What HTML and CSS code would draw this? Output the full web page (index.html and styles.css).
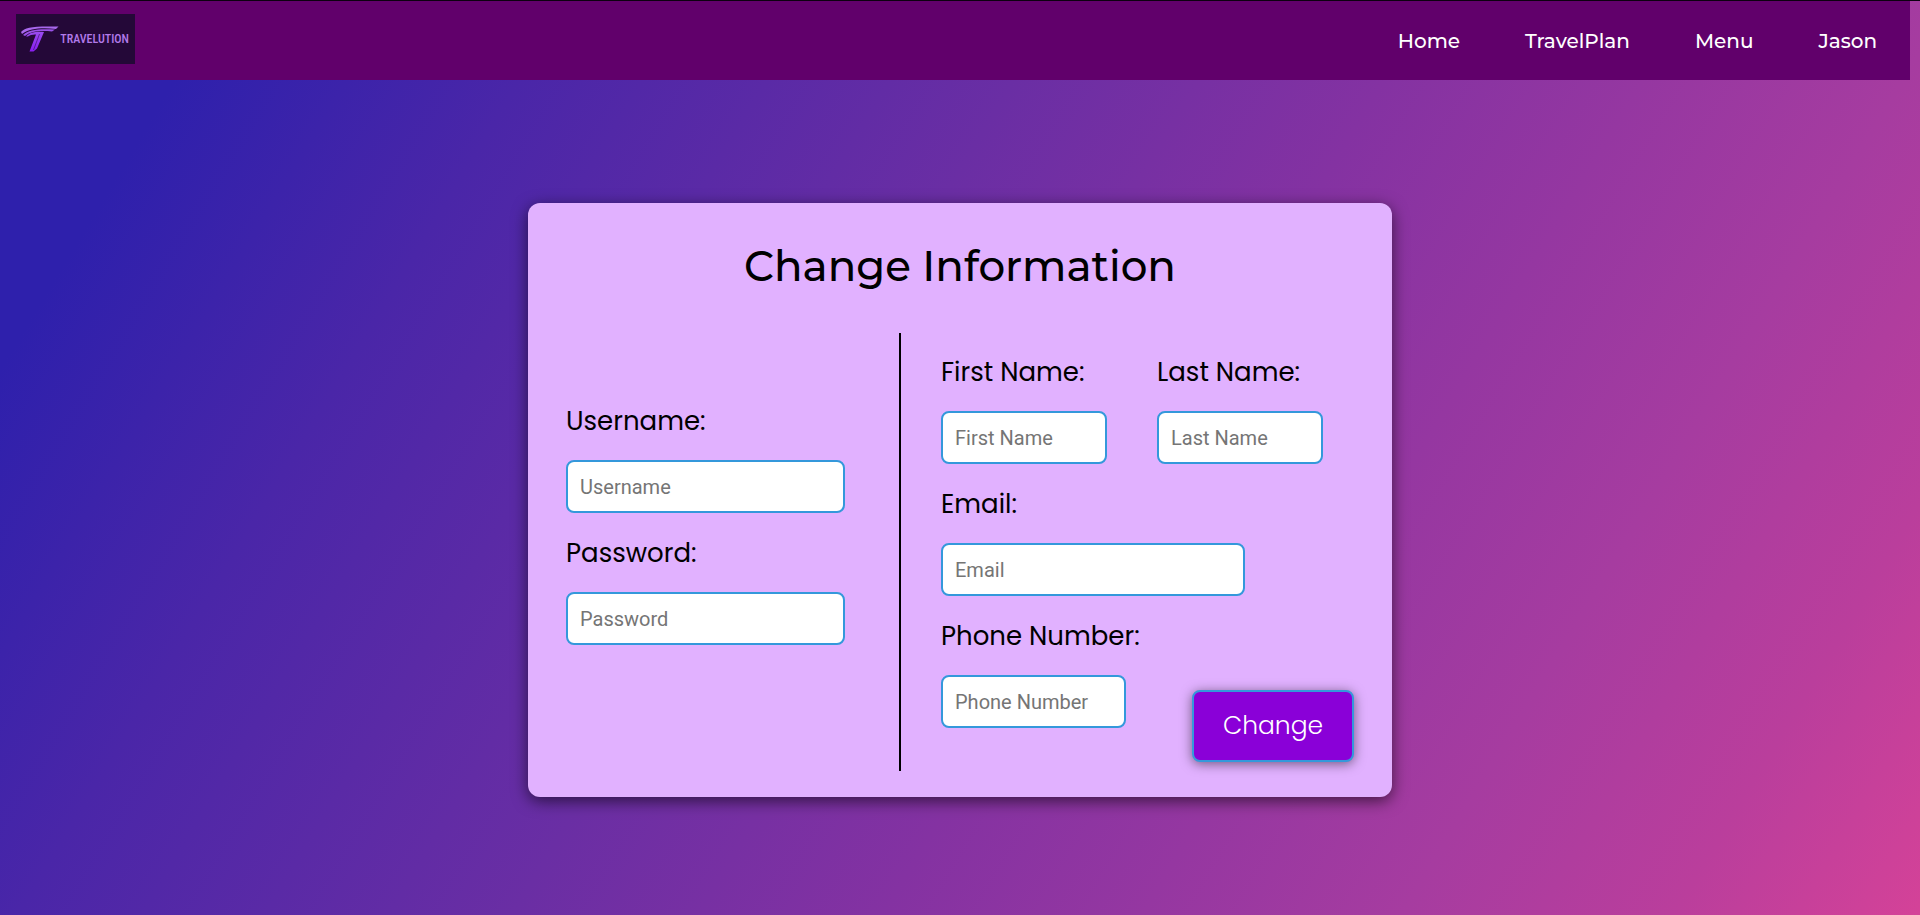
FILE: index.html
```html
<!DOCTYPE html>
<html lang="en">
<head>
<meta charset="utf-8">
<meta name="viewport" content="width=device-width, initial-scale=1">
<title>Travelution - Change Information</title>
<link rel="stylesheet" href="styles.css">
</head>
<body>
<header class="topbar">
  <a class="logo" href="#" aria-label="Travelution">
    <svg class="logo-mark" viewBox="0 0 38 26" aria-hidden="true">
      <defs>
        <linearGradient id="wing" x1="0" y1="0" x2="0" y2="1">
          <stop offset="0" stop-color="#9a4cf0"/>
          <stop offset="1" stop-color="#8a1cf0"/>
        </linearGradient>
      </defs>
      <path d="M0 6C4 1 12 0 37.500 0.500L35 3C22 1.500 9 2 1 8Z" fill="#a868ec"/>
      <path d="M2 9C8 3.500 18 2.500 34 3.500L31 5.500C20 4.500 10 5 4 10Z" fill="#9a52e8"/>
      <path d="M5 10.500C9 6 16 5.500 23 6L16 22.500L12.500 25.500H8.500L15 8.500C12 8.300 8.500 9 7 10.500Z" fill="url(#wing)"/>
      <path d="M18.500 8L12.500 24" stroke="#24083e" stroke-width="0.500"/>
    </svg>
    <span class="logo-name">TRAVELUTION</span>
  </a>
  <nav class="menu" aria-label="Main">
    <a href="#">Home</a>
    <a href="#">TravelPlan</a>
    <a href="#">Menu</a>
    <a href="#">Jason</a>
  </nav>
</header>
<main class="page">
  <form class="card">
    <h1 class="title">Change Information</h1>
    <div class="columns">
      <div class="account">
        <div class="field"><label for="username">Username:</label><input id="username" type="text" placeholder="Username"></div>
        <div class="field"><label for="password">Password:</label><input id="password" type="password" placeholder="Password"></div>
      </div>
      <div class="personal">
        <div class="names">
          <div class="field"><label for="first">First Name:</label><input id="first" type="text" placeholder="First Name"></div>
          <div class="field"><label for="last">Last Name:</label><input id="last" type="text" placeholder="Last Name"></div>
        </div>
        <div class="field email"><label for="email">Email:</label><input id="email" type="email" placeholder="Email"></div>
        <div class="last-row">
          <div class="field phone"><label for="phone">Phone Number:</label><input id="phone" type="tel" placeholder="Phone Number"></div>
          <button class="submit" type="submit">Change</button>
        </div>
      </div>
    </div>
  </form>
</main>
</body>
</html>
```
FILE: styles.css
```css
* { box-sizing: border-box; }

body {
  margin: 0;
  min-height: 100vh;
  display: flex;
  flex-direction: column;
  border-top: 1px solid #0c0010;
  background: linear-gradient(121deg, #2e20ac 0%, #2e20ac 9%, #4a26a8 23%, #6a2ea4 43%, #8432a2 58%, #a63ca0 79%, #ba3e9c 90%, #d44298 100%);
  font-family: Poppins, Inter, sans-serif;
  color: #000;
}

.topbar {
  display: flex;
  align-items: center;
  justify-content: space-between;
  height: 79px;
  margin-right: 10px;
  padding: 0 33px 0 16px;
  background: #61006b;
}

.logo {
  display: flex;
  align-items: center;
  align-self: flex-start;
  justify-content: space-between;
  width: 119px;
  height: 50px;
  margin-top: 13px;
  padding: 0 6px 0 5px;
  background: #240838;
  color: #b27aea;
  text-decoration: none;
}

.logo-mark { width: 38px; height: 26px; }

.logo-name {
  font: 500 12px/12px "Roboto Condensed", "Liberation Sans Narrow", Roboto, sans-serif;
}

.menu {
  display: flex;
  gap: 65px;
}

.menu a {
  color: #fff;
  font: 500 20px/24px Montserrat, Inter, sans-serif;
  text-decoration: none;
}

.page {
  flex: 1;
  display: flex;
  align-items: center;
  justify-content: center;
  padding-top: 4px;
}

.card {
  width: 45%;
  min-width: 840px;
  padding: 33px 38px 26px;
  border-radius: 12px;
  background: #e1b1ff;
  box-shadow: 0 4px 16px rgba(0, 0, 0, 0.6);
}

.title {
  margin: 0 0 37px;
  text-align: center;
  font: 500 42px/60px Montserrat, Inter, sans-serif;
}

.columns {
  display: grid;
  grid-template-columns: 335px 1fr;
}

.account {
  display: flex;
  flex-direction: column;
  justify-content: center;
  gap: 20px;
  padding: 0 54px 58px 0;
  border-right: 2px solid #000;
}

.personal {
  display: flex;
  flex-direction: column;
  gap: 20px;
  padding: 19px 0 9px 40px;
}

.names {
  display: grid;
  grid-template-columns: 166px 166px;
  gap: 50px;
}

.field {
  display: flex;
  flex-direction: column;
  gap: 19px;
}

.field label {
  font-size: 26px;
  line-height: 40px;
  white-space: nowrap;
}

.field input {
  width: 100%;
  height: 53px;
  padding: 2px 12px 0;
  border: 2px solid #3498db;
  border-radius: 8px;
  background: #fff;
  font: 20px/24px Tahoma, Roboto, sans-serif;
}

.field input::placeholder { color: #757575; opacity: 1; }

.email { width: 304px; }

.last-row {
  display: flex;
  align-items: flex-end;
  justify-content: space-between;
}

.phone {
  width: 185px;
  padding-bottom: 34px;
}

.submit {
  width: 162px;
  height: 72px;
  border: 2px solid #3498db;
  border-radius: 8px;
  background: #8a00d8;
  box-shadow: 0 2px 12px rgba(0, 0, 0, 0.5);
  color: #fff;
  font: 300 25px/40px Poppins, Inter, sans-serif;
}
```
